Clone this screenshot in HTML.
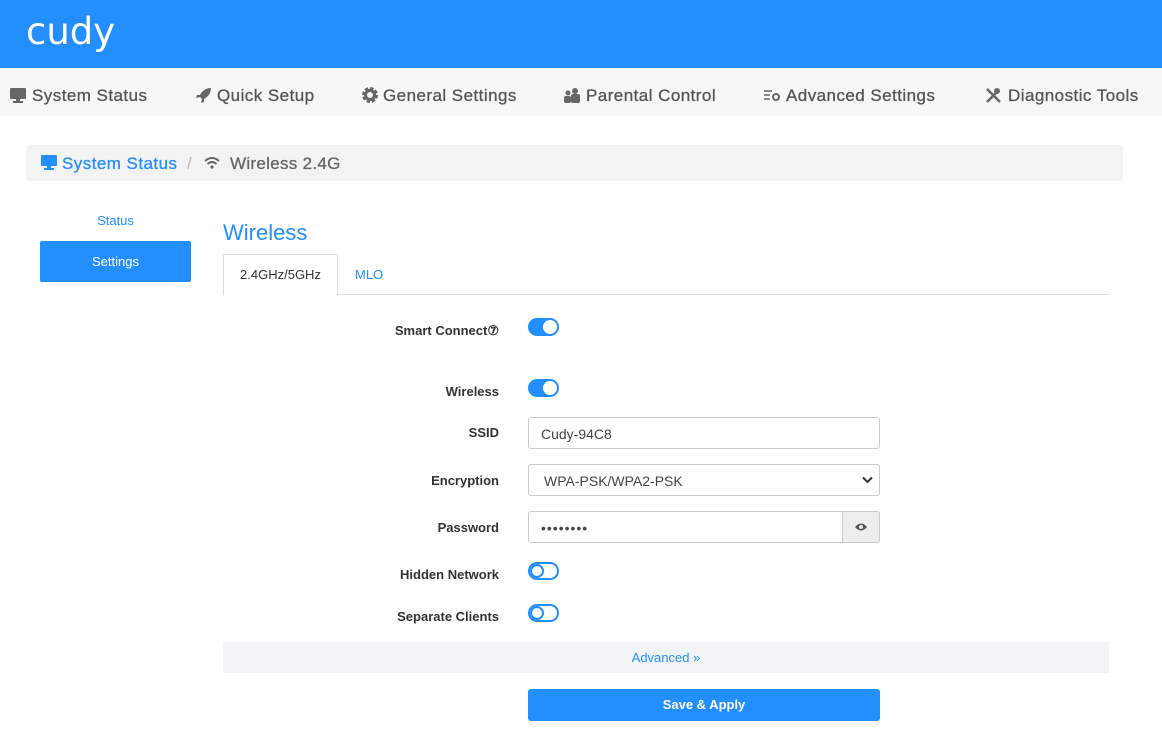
<!DOCTYPE html><html><head><meta charset="utf-8"><style>
*{box-sizing:border-box;margin:0;padding:0}
body{width:1162px;height:753px;background:#fff;font-family:"Liberation Sans",sans-serif;position:relative;overflow:hidden}
.a{position:absolute}
.hdr{left:0;top:0;width:1162px;height:68px;background:#238efe}
.logo{left:26px;top:10px;color:#fff;font-size:37px;font-family:"DejaVu Sans",sans-serif;letter-spacing:0px}
.nav{left:0;top:68px;width:1162px;height:48px;background:#f7f7f7}
.ni{top:86px;font-size:17px;color:#555;white-space:nowrap;letter-spacing:0.45px;-webkit-text-stroke:0.3px #555}
.bc{left:26px;top:145px;width:1097px;height:36px;background:#f3f3f3;border-radius:3px}
.lbl{right:663px;font-size:13px;font-weight:bold;color:#333;text-align:right;white-space:nowrap}
.tg{left:528px;width:31px;height:18px;border-radius:9px}
.tg.on{background:#238efe}
.tg.on::after{content:"";position:absolute;right:2px;top:2px;width:14px;height:14px;border-radius:50%;background:#fff}
.tg.off{border:2px solid #238efe;background:#fff}
.tg.off::after{content:"";position:absolute;left:0px;top:0px;width:14px;height:14px;border-radius:50%;border:2px solid #238efe;box-sizing:border-box}
.in{left:528px;width:352px;height:32px;border:1px solid #ccc;border-radius:3px;font-size:14px;color:#444;padding:8px 12px}
</style></head><body>
<div class="a hdr"></div>
<div class="a logo">cudy</div>
<div class="a nav"></div>
<svg class="a" style="left:10px;top:87px" width="16" height="16" viewBox="0 0 16 16"><rect x="0" y="1" width="16" height="11" rx="1" fill="#666"/><rect x="6" y="12" width="4" height="2" fill="#666"/><rect x="3" y="14" width="10" height="2" fill="#666"/></svg>
<div class="a ni" style="left:32px">System Status</div>
<svg class="a" style="left:196px;top:87px" width="16" height="16" viewBox="0 0 16 16"><path d="M15 1C10 1 6 4 4 8L1 8 0 11 4 10 6 12 5 16 8 15 8 12C12 10 15 6 15 1Z" fill="#666"/></svg>
<div class="a ni" style="left:217px">Quick Setup</div>
<svg class="a" style="left:362px;top:87px" width="16" height="16" viewBox="0 0 16 16"><circle cx="8" cy="8" r="6" fill="none" stroke="#666" stroke-width="4" stroke-dasharray="3 1.7"/><circle cx="8" cy="8" r="4.5" fill="none" stroke="#666" stroke-width="3"/></svg>
<div class="a ni" style="left:383px">General Settings</div>
<svg class="a" style="left:564px;top:88px" width="16" height="15" viewBox="0 0 16 15"><circle cx="4" cy="5" r="2.5" fill="#666"/><circle cx="11" cy="3" r="3" fill="#666"/><rect x="0" y="8" width="7" height="7" rx="2" fill="#666"/><rect x="7" y="6" width="9" height="9" rx="2" fill="#666"/></svg>
<div class="a ni" style="left:586px">Parental Control</div>
<svg class="a" style="left:764px;top:89px" width="16" height="14" viewBox="0 0 16 14"><path d="M0 2H8M0 6H6M0 10H6" stroke="#666" stroke-width="1.6"/><circle cx="12" cy="8" r="3" fill="none" stroke="#666" stroke-width="2"/></svg>
<div class="a ni" style="left:786px">Advanced Settings</div>
<svg class="a" style="left:985px;top:87px" width="17" height="17" viewBox="0 0 17 17"><path d="M2 15L11 6M2 2L15 15" stroke="#666" stroke-width="2.5"/><circle cx="12" cy="4" r="3" fill="#666"/></svg>
<div class="a ni" style="left:1008px">Diagnostic Tools</div>
<div class="a bc"></div>
<svg class="a" style="left:41px;top:155px" width="16" height="15" viewBox="0 0 16 15"><rect x="0" y="0" width="16" height="11" rx="1" fill="#238efe"/><rect x="6" y="11" width="4" height="2" fill="#238efe"/><rect x="3" y="13" width="10" height="2" fill="#238efe"/></svg>
<div class="a" style="left:62px;top:154px;font-size:17px;color:#238efe;letter-spacing:0.45px;-webkit-text-stroke:0.3px #238efe">System Status</div>
<div class="a" style="left:187px;top:154px;font-size:17px;color:#bbb">/</div>
<svg class="a" style="left:204px;top:157px" width="16" height="12" viewBox="0 0 16 12"><path d="M1 4Q8-2 15 4M3.5 7Q8 3 12.5 7" fill="none" stroke="#666" stroke-width="2"/><circle cx="8" cy="10" r="1.6" fill="#666"/></svg>
<div class="a" style="left:230px;top:154px;font-size:17px;color:#666;letter-spacing:0.3px;-webkit-text-stroke:0.3px #666">Wireless 2.4G</div>
<div class="a" style="left:40px;top:213px;width:151px;text-align:center;font-size:13px;color:#238efe">Status</div>
<div class="a" style="left:40px;top:241px;width:151px;height:41px;background:#238efe;color:#fff;font-size:13px;text-align:center;line-height:41px;border-radius:2px">Settings</div>
<div class="a" style="left:223px;top:220px;font-size:22px;color:#238efe">Wireless</div>
<div class="a" style="left:223px;top:294px;width:886px;height:1px;background:#ddd"></div>
<div class="a" style="left:223px;top:254px;width:115px;height:41px;border:1px solid #ddd;border-bottom:none;background:#fff;font-size:13px;color:#333;text-align:center;line-height:40px">2.4GHz/5GHz</div>
<div class="a" style="left:355px;top:267px;font-size:13px;color:#238efe">MLO</div>
<div class="a lbl" style="top:323px">Smart Connect⑦</div>
<div class="a tg on" style="top:318px"></div>
<div class="a lbl" style="top:384px">Wireless</div>
<div class="a tg on" style="top:379px"></div>
<div class="a lbl" style="top:425px">SSID</div>
<div class="a in" style="top:417px">Cudy-94C8</div>
<div class="a lbl" style="top:473px">Encryption</div>
<div class="a in" style="top:464px;padding-left:15px">WPA-PSK/WPA2-PSK</div>
<svg class="a" style="left:862px;top:476px" width="11" height="8" viewBox="0 0 11 8"><path d="M1 1.5L5.5 6 10 1.5" fill="none" stroke="#333" stroke-width="2"/></svg>
<div class="a lbl" style="top:520px">Password</div>
<div class="a in" style="top:511px;font-size:14px;letter-spacing:1px">••••••••</div>
<div class="a" style="left:842px;top:511px;width:38px;height:32px;background:#eee;border:1px solid #ccc;border-radius:0 3px 3px 0"></div>
<svg class="a" style="left:854px;top:522px" width="14" height="10" viewBox="0 0 14 10"><path d="M1 5Q7-2 13 5Q7 12 1 5Z" fill="#555"/><circle cx="7" cy="5" r="2" fill="#eee"/></svg>
<div class="a lbl" style="top:567px">Hidden Network</div>
<div class="a tg off" style="top:562px"></div>
<div class="a lbl" style="top:609px">Separate Clients</div>
<div class="a tg off" style="top:604px"></div>
<div class="a" style="left:223px;top:642px;width:886px;height:31px;background:#f2f5f8;text-align:center;line-height:31px;font-size:13px;color:#238efe">Advanced »</div>
<div class="a" style="left:528px;top:689px;width:352px;height:32px;background:#238efe;color:#fff;font-size:13px;font-weight:bold;text-align:center;line-height:32px;border-radius:3px">Save &amp; Apply</div>
</body></html>
